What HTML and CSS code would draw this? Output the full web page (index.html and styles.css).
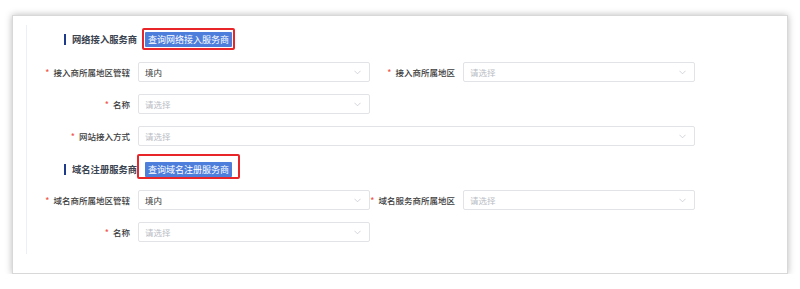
FILE: index.html
```html
<!DOCTYPE html>
<html>
    <head>
        <meta charset="utf-8">
        <title>服务商信息</title>
        <link rel="stylesheet" href="styles.css">
    </head>
    <body>
        <div id="frame">
            <div class="card">
                <div class="inner">
                    <div class="heading">
                        <span class="headingBar"></span>
                        <span class="headingText">网络接入服务商</span>
                        <span class="button mark markA">查询网络接入服务商</span>
                    </div>
                    <div class="row">
                        <span class="label"><i>*</i>接入商所属地区管辖</span>
                        <div class="select"><span>境内</span><svg viewBox="0 0 8 5"><path d="M0.5 0.5 L4 4 L7.5 0.5"/></svg></div>
                        <span class="label"><i>*</i>接入商所属地区</span>
                        <div class="select empty"><span>请选择</span><svg viewBox="0 0 8 5"><path d="M0.5 0.5 L4 4 L7.5 0.5"/></svg></div>
                    </div>
                    <div class="row">
                        <span class="label"><i>*</i>名称</span>
                        <div class="select empty"><span>请选择</span><svg viewBox="0 0 8 5"><path d="M0.5 0.5 L4 4 L7.5 0.5"/></svg></div>
                    </div>
                    <div class="row">
                        <span class="label"><i>*</i>网站接入方式</span>
                        <div class="select empty wide"><span>请选择</span><svg viewBox="0 0 8 5"><path d="M0.5 0.5 L4 4 L7.5 0.5"/></svg></div>
                    </div>

                    <div class="heading second">
                        <span class="headingBar"></span>
                        <span class="headingText">域名注册服务商</span>
                        <span class="button mark markB">查询域名注册服务商</span>
                    </div>
                    <div class="row">
                        <span class="label"><i>*</i>域名商所属地区管辖</span>
                        <div class="select"><span>境内</span><svg viewBox="0 0 8 5"><path d="M0.5 0.5 L4 4 L7.5 0.5"/></svg></div>
                        <span class="label"><i>*</i>域名服务商所属地区</span>
                        <div class="select empty"><span>请选择</span><svg viewBox="0 0 8 5"><path d="M0.5 0.5 L4 4 L7.5 0.5"/></svg></div>
                    </div>
                    <div class="row">
                        <span class="label"><i>*</i>名称</span>
                        <div class="select empty"><span>请选择</span><svg viewBox="0 0 8 5"><path d="M0.5 0.5 L4 4 L7.5 0.5"/></svg></div>
                    </div>
                </div>
            </div>
        </div>
    </body>
</html>
```

FILE: styles.css
```css
* {
    box-sizing: border-box;
    font-family: "Noto Sans CJK SC", "Noto Sans", sans-serif;
}

html, body {
    margin: 0;
    background: #fff;
}

#frame {
    padding: 15px 12px 0 12px;
}

.card {
    background: #fff;
    border: 1px solid #d8d8d8;
    box-shadow: 0 0 7px rgba(0, 0, 0, 0.28);
    padding: 9px 0 19px 13px;
}

.inner {
    border-left: 1px solid #eaf0f4;
    padding: 3px 0 12px 0;
}

.heading {
    height: 22px;
    display: flex;
    align-items: center;
    padding-left: 37px;
    margin-bottom: 12px;
}

.heading.second {
    margin-top: 11px;
    margin-bottom: 10px;
}

.headingBar {
    width: 2px;
    height: 11px;
    background: #1e3a8a;
    margin-right: 6px;
}

.headingText {
    font-size: 9.3px;
    font-weight: 700;
    color: #3a4350;
    width: 65px;
    white-space: nowrap;
    margin-right: 8px;
}

.button {
    height: 15px;
    line-height: 15px;
    padding: 0 3px;
    width: 87px;
    text-align: center;
    font-size: 9px;
    color: #fff;
    background: #4d7edc;
    border-radius: 1px;
    white-space: nowrap;
}

.mark {
    position: relative;
}

.mark::after {
    content: "";
    position: absolute;
    border: 2px solid #e8262a;
    border-radius: 2px;
}

.markA::after {
    left: -3px;
    right: -3px;
    top: -4px;
    bottom: -3px;
}

.markB::after {
    left: -8px;
    right: -8px;
    top: -8px;
    bottom: -2px;
}

.row {
    display: grid;
    grid-template-columns: 103px 232px 77px 232px;
    column-gap: 8px;
    height: 20px;
    margin-bottom: 12px;
}

.row:last-child {
    margin-bottom: 0;
}

.label {
    display: flex;
    justify-content: flex-end;
    align-items: center;
    white-space: nowrap;
    font-size: 8.5px;
    font-weight: 500;
    color: #3c3c3c;
}

.label i {
    font-style: normal;
    color: #f0584f;
    margin-right: 4px;
}

.select {
    display: flex;
    align-items: center;
    justify-content: space-between;
    border: 1px solid #e1e3e7;
    border-radius: 2px;
    padding: 0 8px 0 6px;
    font-size: 8.5px;
    color: #333;
}

.select.empty {
    color: #b8bcc4;
}

.select.wide {
    grid-column: 2 / 5;
}

.select svg {
    width: 7px;
    height: 5px;
    fill: none;
    stroke: #c6cad2;
    stroke-width: 0.9;
}
```
